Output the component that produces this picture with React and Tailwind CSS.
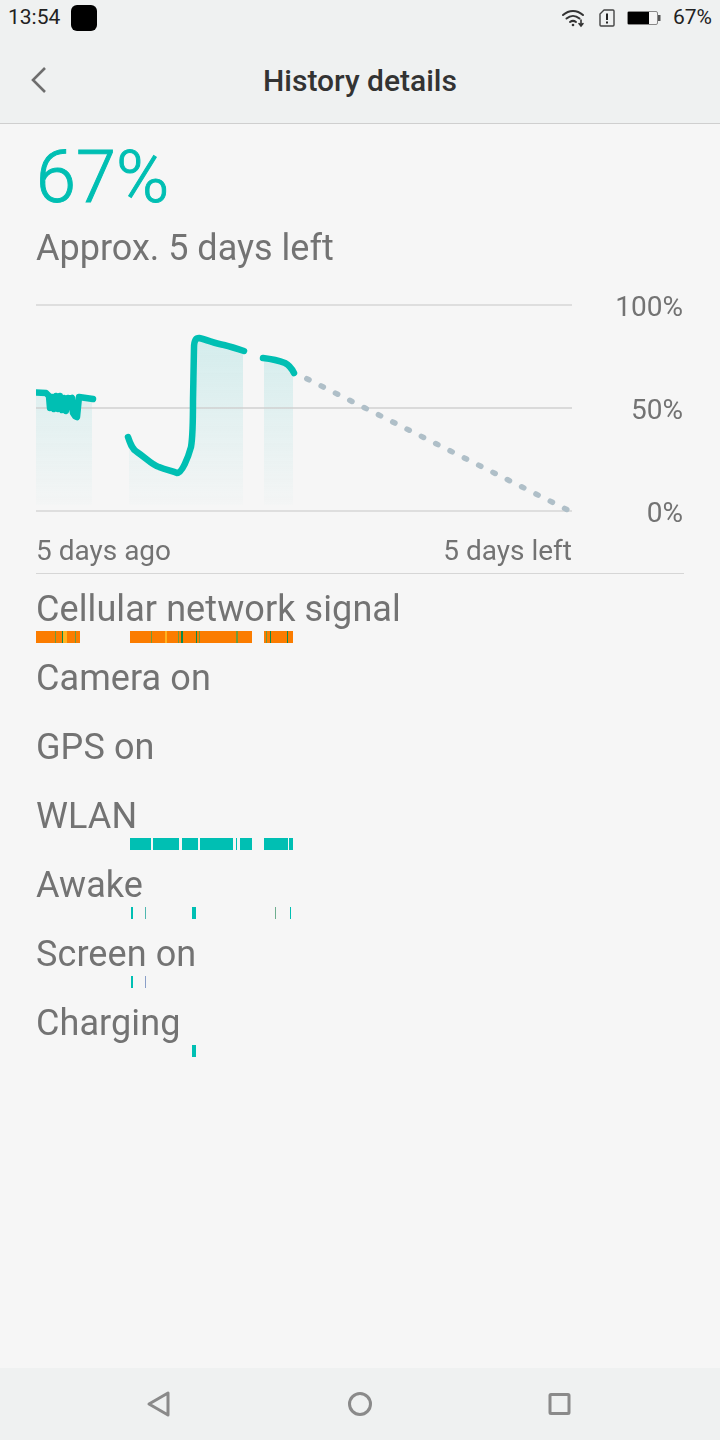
import React from "react";

const TEAL = "#00bfb3";
const seg1 = [[36,392.5],[46,393],[49,396],[50,408],[52,397],[54,409],[56,396],[58,409],[60,396],[62,410],[64,398],[66,411],[68,398],[70,399],[72,398],[73,413],[75,416],[77,417],[79,397],[93,399]];
const seg2 = "M128 437 C130 443 132 449 137 452 C146 458 152 465 159 467 C166 470 172 471 177 473 C182 473 188 458 191 447 C193 436 193 425 193 400 L194 348 C194 340 196 338 199 338 C208 340 216 344 224 345 C232 347 238 349 244 351";
const seg3 = "M263 358 C272 359 280 361 285 363 C289 365 292 369 294 373";
const pts = (a) => a.map((p) => p.join(",")).join(" ");
const shift = (a) => a.map(([x, y]) => [x - 36, y - 300]);

const area1 = [[36,393],[46,393],[50,398],[59,405],[74,412],[79,399],[92,399],[92,505],[36,505]];
const area2 = [[129,440],[137,452],[159,467],[177,473],[191,447],[194,348],[199,338],[224,345],[243,351],[243,505],[129,505]];
const area3 = [[264,358],[285,363],[293,372],[293,505],[264,505]];

function Chart() {
  return (
    <svg width="536" height="216" viewBox="0 0 536 216" className="block shrink-0">
      <defs>
        <linearGradient id="areaFill" gradientUnits="userSpaceOnUse" x1="0" y1="38" x2="0" y2="205">
          <stop offset="0" stopColor="#d3ecec" />
          <stop offset="1" stopColor="#d3ecec" stopOpacity="0.05" />
        </linearGradient>
      </defs>
      {[area1, area2, area3].map((a, i) => (
        <polygon key={i} points={pts(shift(a))} fill="url(#areaFill)" />
      ))}
      <line x1="0" x2="536" y1="5" y2="5" stroke="#d6d6d6" strokeWidth="1.5" />
      <line x1="0" x2="536" y1="108" y2="108" stroke="#d0d0d0" strokeWidth="1.5" />
      <line x1="0" x2="536" y1="211" y2="211" stroke="#d6d6d6" strokeWidth="1.5" />
      <line x1="270.8" y1="78.7" x2="531.4" y2="209.8" stroke="#afbfc8" strokeWidth="5.5" strokeLinecap="round" strokeDasharray="2.5 13.53" />
      <polyline points={pts(shift(seg1))} fill="none" stroke={TEAL} strokeWidth="6.5" strokeLinecap="round" strokeLinejoin="round" />
      <g transform="translate(-36 -300)" fill="none" stroke={TEAL} strokeWidth="6.5" strokeLinecap="round" strokeLinejoin="round">
        <path d={seg2} />
        <path d={seg3} />
      </g>
    </svg>
  );
}

const O = "#fb7c00", G = "#0a8a4a", L = "#6f9a3a", Y = "#ffb31f";
const rows = [
  { label: "Cellular network signal", bars: [
    [36,44,O],[55,1,L],[62,1,G],[63,4,Y],[75,1,L],
    [130,122,O],[151,1,L],[165,2,Y],[178,1,L],[181,2,G],[196,1,G],[199,1,L],[236,2,L],
    [264,29,O],[266,1,L],[270,1,G],[287,1,G],
  ]},
  { label: "Camera on", bars: [] },
  { label: "GPS on", bars: [] },
  { label: "WLAN", bars: [[130,21,TEAL],[153,26,TEAL],[182,16,TEAL],[200,33,TEAL],[236,1,TEAL],[240,12,TEAL],[264,24,TEAL],[289,4,TEAL]] },
  { label: "Awake", bars: [[131,2,TEAL],[145,1,"#4fb7b0"],[192,4,TEAL],[275,1,"#6fae8f"],[290,1,TEAL]] },
  { label: "Screen on", bars: [[131,2,TEAL],[145,1,"#8a9fc8"]] },
  { label: "Charging", bars: [[192,4,TEAL]] },
];

function Row({ label, bars }) {
  return (
    <div className="mb-[12px]">
      <div className="h-[45px] text-[36px] leading-[46px] tracking-[0.09px] text-[#737373] whitespace-nowrap">{label}</div>
      <svg width="648" height="12" viewBox="0 0 648 12" className="block">
        {bars.map(([x, w, c], i) => (
          <rect key={i} x={x - 36} y="0" width={w} height="12" fill={c} />
        ))}
      </svg>
    </div>
  );
}

export default function App() {
  return (
    <div className="w-[720px] h-[1440px] flex flex-col bg-[#f6f6f6] font-['Roboto',sans-serif] overflow-hidden">
      <header className="h-[124px] shrink-0 bg-[#eff1f1] border-b border-[#cfcfcf] flex flex-col">
        <div className="h-[36px] flex items-center pl-[8px] pr-[8px] text-[21px] text-[#222]">
          <span>13:54</span>
          <span className="ml-[11px] w-[26px] h-[26px] rounded-[6px] bg-black" />
          <span className="ml-auto flex items-center">
            <svg width="24" height="20" viewBox="0 0 24 20" fill="none" stroke="#333" strokeWidth="2" strokeLinecap="round">
              <path d="M2 7 C8 1.5 16 1.5 22 7" />
              <path d="M5.5 10.5 C9.5 7 14.5 7 18.5 10.5" />
              <path d="M9 14 C11 12.5 13 12.5 15 14" />
              <circle cx="12" cy="17" r="1.3" fill="#333" stroke="none" />
              <path d="M20 12 V17 M18 15.5 L20 18 L22 15.5" strokeWidth="1.6" />
            </svg>
            <svg width="16" height="20" viewBox="0 0 16 20" fill="none" className="ml-[14px]">
              <path d="M5 2 H14 a1 1 0 0 1 1 1 V17 a1 1 0 0 1 -1 1 H2 a1 1 0 0 1 -1 -1 V6 Z" stroke="#444" strokeWidth="1.4" strokeLinejoin="round" />
              <path d="M8 5.5 V12" stroke="#222" strokeWidth="2" />
              <rect x="7" y="13.5" width="2" height="2" fill="#222" />
            </svg>
            <svg width="34" height="16" viewBox="0 0 34 16" className="ml-[12px]">
              <rect x="0.5" y="1.5" width="30" height="13" rx="1.5" fill="#f4f4f4" stroke="#888" />
              <rect x="1" y="2" width="21" height="12" fill="#000" />
              <rect x="31" y="5" width="2.5" height="6" fill="#555" />
            </svg>
            <span className="ml-[12px]">67%</span>
          </span>
        </div>
        <div className="relative h-[87px] flex items-center justify-center">
          <svg width="18" height="28" viewBox="0 0 18 28" fill="none" stroke="#6e6e6e" strokeWidth="2.6" className="absolute left-[30px] top-[30px]">
            <path d="M15 2 L3 14 L15 26" />
          </svg>
          <h1 className="text-[30px] font-medium text-[#333] mt-[2px]">History details</h1>
        </div>
      </header>

      <main className="flex-1 pl-[36px] pr-[36px] [will-change:transform]">
        <div className="h-[100px] pt-[12px] text-[72px] leading-[84px] font-light [-webkit-text-stroke:1px_#00bfb3] text-[#00bfb3]">67%</div>
        <div className="h-[48px] text-[36px] leading-[48px] text-[#737373]">Approx. 5 days left</div>
        <div className="mt-[28px] flex">
          <Chart />
          <div className="flex-1 flex flex-col items-end pt-[7px] pr-[1px] h-[216px] text-[28px] text-[#737373]">
            <span className="h-[0px] leading-[0px]">100%</span>
            <span className="mt-[103px] h-[0px] leading-[0px]">50%</span>
            <span className="mt-[103px] h-[0px] leading-[0px]">0%</span>
          </div>
        </div>
        <div className="mt-[16px] flex w-[536px] justify-between text-[28px] leading-[37px] text-[#737373] h-[41px]">
          <span>5 days ago</span>
          <span>5 days left</span>
        </div>
        <div className="border-t border-[#d6d6d6] pt-[12px]">
          {rows.map((r) => <Row key={r.label} {...r} />)}
        </div>
      </main>

      <nav className="h-[72px] shrink-0 bg-[#eff1f1] flex items-center justify-center gap-[175px] pb-[1px] pr-[2px]">
        <svg width="26" height="28" viewBox="0 0 26 28" fill="none" stroke="#8a8a8a" strokeWidth="3" strokeLinejoin="round"><path d="M22 3 V25 L3 14 Z" /></svg>
        <svg width="26" height="26" viewBox="0 0 26 26" fill="none" stroke="#8a8a8a" strokeWidth="3"><circle cx="13" cy="13" r="10.5" /></svg>
        <svg width="24" height="24" viewBox="0 0 24 24" fill="none" stroke="#8a8a8a" strokeWidth="3" strokeLinejoin="round"><rect x="2" y="2.5" width="19" height="19" rx="1" /></svg>
      </nav>
    </div>
  );
}
